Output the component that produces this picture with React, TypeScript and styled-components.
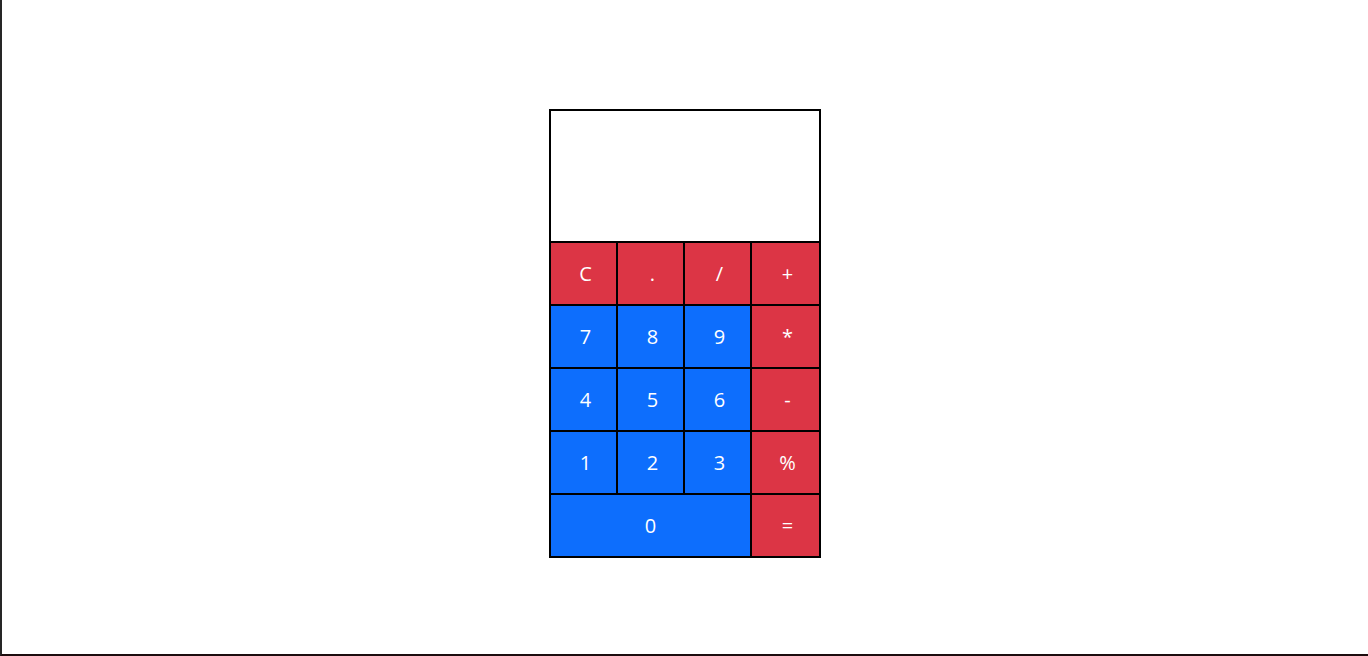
import React from "react";
import styled, { createGlobalStyle } from "styled-components";

const Global = createGlobalStyle`
  * { box-sizing: border-box; }
  html, body { margin: 0; padding: 0; background: #fff; }
  body {
    height: 656px;
    border-left: 2px solid #262626;
    border-bottom: 2px solid #1c0c0e;
    font-family: "Open Sans", "Noto Sans", sans-serif;
  }
`;

const Page = styled.div`
  display: flex;
  justify-content: center;
  padding-top: 109px;
`;

const Calculator = styled.div`
  width: 272px;
  border: 1px solid #000;
  background: #fff;
`;

const Display = styled.div`
  height: 132px;
  border: 1px solid #000;
  background: #fff;
`;

const Keys = styled.div`
  display: grid;
  grid-template-columns: 67px 67px 67px 1fr;
  grid-auto-rows: 63px;
`;

const Key = styled.button<{ $variant: "op" | "num"; $span?: number }>`
  grid-column: span ${(p) => p.$span ?? 1};
  border: 1px solid #000;
  margin: 0;
  padding: 0 0 0 ${(p) => (p.$span ? 0 : 4)}px;
  background: ${(p) => (p.$variant === "op" ? "#dc3545" : "#0d6efd")};
  color: #fff;
  font-family: "Open Sans", "Noto Sans", sans-serif;
  font-size: 20px;
  display: flex;
  align-items: center;
  justify-content: center;
  cursor: pointer;
`;

const keys: { label: string; v: "op" | "num"; span?: number }[] = [
  { label: "C", v: "op" },
  { label: ".", v: "op" },
  { label: "/", v: "op" },
  { label: "+", v: "op" },
  { label: "7", v: "num" },
  { label: "8", v: "num" },
  { label: "9", v: "num" },
  { label: "*", v: "op" },
  { label: "4", v: "num" },
  { label: "5", v: "num" },
  { label: "6", v: "num" },
  { label: "-", v: "op" },
  { label: "1", v: "num" },
  { label: "2", v: "num" },
  { label: "3", v: "num" },
  { label: "%", v: "op" },
  { label: "0", v: "num", span: 3 },
  { label: "=", v: "op" },
];

export default function App() {
  return (
    <>
      <Global />
      <Page>
        <Calculator>
          <Display />
          <Keys>
            {keys.map((k) => (
              <Key key={k.label} $variant={k.v} $span={k.span}>
                {k.label}
              </Key>
            ))}
          </Keys>
        </Calculator>
      </Page>
    </>
  );
}
